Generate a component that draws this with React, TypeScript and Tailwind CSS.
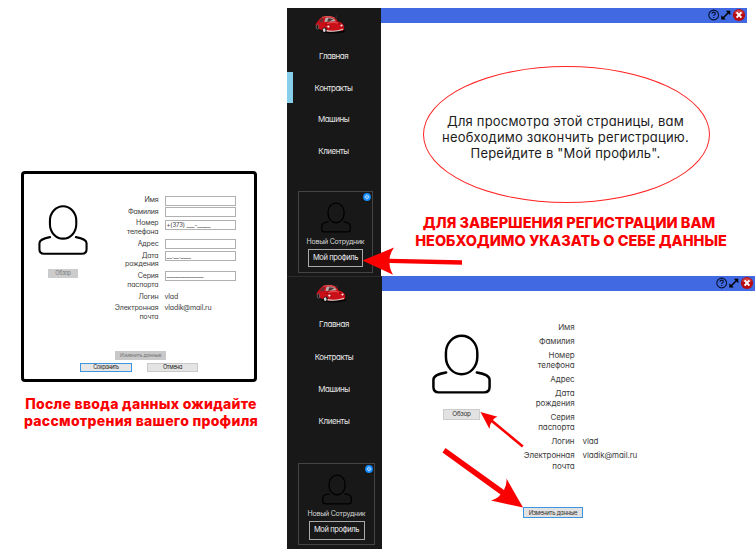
import React from "react";

const gothic = "font-['Inter','Open_Sans',sans-serif] [font-feature-settings:'cv11']";

function Person({ className }: { className: string }) {
  return (
    <svg viewBox="0 0 50 50.5" className={className} fill="none" stroke="currentColor" strokeWidth="2.1" strokeLinecap="round">
      <rect x="11.8" y="1.3" width="26.6" height="32.7" rx="13.3" ry="14.6" />
      <path d="M12 32.4C7.8 33.2 1.2 34.4 1.2 38.6v6.2c0 3.2 1.6 4.5 4.5 4.5h38.6c2.9 0 4.5-1.3 4.5-4.5v-6.2c0-4.2-6.6-5.4-10.8-6.2" />
    </svg>
  );
}

function Car() {
  return (
    <svg viewBox="0 0 30 21" preserveAspectRatio="none" className="block h-[20px] w-[30px]">
      <ellipse cx="18" cy="17" rx="12" ry="2.5" fill="#050505" />
      <path d="M21.3 5V0" stroke="#444" strokeWidth=".5" />
      <path d="M1 9C3 7 4 3.6 7.5 2.2c4-1.5 9-1.2 12 .6 1.6 1 2.6 2.4 3 4 3 .6 6 2.2 6.6 5.2.3 2-.1 3.8-1.5 4.6L11 17.5 1.5 13.5C.6 12 .4 10.4 1 9Z" fill="#c90f18" />
      <path d="M3.8 7.5C4.8 5 6.5 3.4 8.5 3L8 7.6Z" fill="#6b3034" />
      <path d="M9.5 7.3 10.4 3c3-.7 6.2-.3 8.4.9 1 .7 1.7 1.6 2 2.7Z" fill="#b8aaa8" />
      <path d="m12 7 1.5-3.5 5 .6-4 2.8Z" fill="#4c3032" />
      <path d="M7 2.5C11 .9 16 1.2 19.5 3M12 9.2c4-1.8 8-1.8 11-.5" stroke="#f25a58" strokeWidth=".9" fill="none" />
      <path d="M10 10c3-1 5 .4 5.4 3.8M23 9c3 .2 4.7 2 5 4" stroke="#7d0509" strokeWidth=".7" fill="none" />
      <ellipse cx="2.4" cy="12.5" rx="1.2" ry="2.5" fill="#171717" stroke="#999" strokeWidth=".5" />
      <ellipse cx="9.6" cy="15.8" rx="2.3" ry="2.8" fill="#161616" />
      <ellipse cx="9.2" cy="15.8" rx="1.3" ry="2" fill="#ddd" />
      <circle cx="13.4" cy="12.2" r="1.2" fill="#f9e8e5" />
      <circle cx="26.5" cy="11" r="1.1" fill="#f9e8e5" />
      <path d="M11.5 16.4c5 1 11 .8 16.5-1.5" stroke="#d9d5d3" strokeWidth="1.1" fill="none" />
    </svg>
  );
}

function Gear() {
  return (
    <svg viewBox="0 0 8 8" className="absolute right-[1.5px] top-[1px] h-2 w-2">
      <circle cx="4" cy="4" r="3.9" fill="#168bfd" />
      <circle cx="4" cy="4" r="1.4" fill="none" stroke="#c7e4ff" strokeWidth=".9" />
      <circle cx="4" cy="4" r="2.1" fill="none" stroke="#c7e4ff" strokeWidth=".6" strokeDasharray=".8 .85" />
    </svg>
  );
}

function TitleBar() {
  return (
    <header className="flex h-[15px] shrink-0 items-start justify-end bg-[#4169e1]">
      <svg viewBox="0 0 40 14" className="h-[14px] w-10">
        <circle cx="6.7" cy="7" r="4.9" fill="none" stroke="#07102d" strokeWidth="1.1" />
        <path d="M5 5.8c0-2.2 3.3-2.2 3.3-.1 0 1.2-1.6 1.1-1.6 2.4M6.7 9.1v1" fill="none" stroke="#07102d" strokeWidth="1.1" />
        <path d="m15.8 10.2 6-6" stroke="#000" strokeWidth="1.5" />
        <path d="M18.8 2.8h4.5v4.4ZM14.3 7.2v4.4h4.5Z" fill="#000" />
        <circle cx="32" cy="7" r="6.1" fill="#b70c11" />
        <path d="M27.2 5.2a5.2 5.2 0 0 1 9.6 0Q32 7 27.2 5.2" fill="#d14040" />
        <path d="m29.6 4.4 4.8 5.2m0-5.2-4.8 5.2" stroke="#fff" strokeWidth="2" />
      </svg>
    </header>
  );
}

const navItems = ["Главная", "Контракты", "Машины", "Клиенты"];

function Sidebar({ active, large }: { active?: string; large?: boolean }) {
  return (
    <aside className={`flex shrink-0 flex-col bg-[#181818] ${large ? "w-[95px] border-t border-t-[#2c2c2c]" : "w-[94px]"}`}>
      <div className={`flex shrink-0 justify-center pr-[8px] pt-[7px] ${large ? "h-[31px]" : "h-8"}`}>
        <Car />
      </div>
      <nav>
        {navItems.map((item) => (
          <div
            key={item}
            className={`flex items-center justify-center whitespace-nowrap border-l-[6px] pr-[7px] text-[8px] text-[#e4e4e4] ${
              large ? "h-[32.4px] tracking-[-0.4px]" : "h-[31.7px] tracking-[-0.5px]"
            } ${active === item ? "border-[#87ceeb]" : "border-transparent"}`}
          >
            {item}
          </div>
        ))}
      </nav>
      <div
        className={`relative ml-[11px] flex h-[82px] flex-col items-center border border-[#444] pt-[10px] ${
          large ? "mt-[25px] w-[77px]" : "mt-[24px] w-[75px]"
        }`}
      >
        <Gear />
        <Person className="h-[31px] w-[30px] text-black" />
        <span className="mt-[2px] whitespace-nowrap text-[7px] leading-[13px] tracking-[-0.25px] text-[#d5d5d5]">
          Новый Сотрудник
        </span>
        <button
          className={`mt-px flex shrink-0 items-center justify-center whitespace-nowrap border border-[#aaa] text-[7.5px] tracking-[-0.4px] text-[#eee] ${
            large ? "h-[19px] w-[56px]" : "h-[18px] w-[55px]"
          }`}
        >
          Мой профиль
        </button>
      </div>
    </aside>
  );
}

type Field = { lines: string[]; value?: string; text?: string; nudge?: string };

const fields: Field[] = [
  { lines: ["Имя"], value: "" },
  { lines: ["Фамилия"], value: "", nudge: "-mt-[1px]" },
  { lines: ["Номер", "телефона"], value: "+(373) ___-_____", nudge: "mt-[1px]" },
  { lines: ["Адрес"], value: "", nudge: "-mt-[1px]" },
  { lines: ["Дата", "рождения"], value: "__.__.____", nudge: "-mt-[0.5px]" },
  { lines: ["Серия", "паспорта"], value: "______________", nudge: "-mt-[1.5px]" },
  { lines: ["Логин"], text: "vlad" },
  { lines: ["Электронная", "почта"], text: "vladik@mail.ru" },
];

function Fields({ editable }: { editable?: boolean }) {
  return (
    <div
      className={`flex flex-col text-[#404040] ${
        editable
          ? "gap-[2.9px] text-[7px] leading-[8.8px] tracking-[-0.15px]"
          : "gap-[3.3px] text-[8px] leading-[10.5px] tracking-[-0.1px]"
      }`}
    >
      {fields.map((f) => (
        <div key={f.lines[0]} className={`flex items-start ${editable ? "gap-[6px]" : "gap-[8px]"}`}>
          <div className="w-[60px] whitespace-nowrap text-right">
            {f.lines.map((line) => (
              <div key={line}>{line}</div>
            ))}
          </div>
          {f.text && <span>{f.text}</span>}
          {editable && f.value !== undefined && (
            <div className={`h-[8.8px] ${f.nudge ?? ""}`}>
              <div className="flex h-[10px] w-[71px] items-center whitespace-nowrap border border-[#b0b0b0] pl-px text-[6px] tracking-[-0.1px]">
                {f.value}
              </div>
            </div>
          )}
        </div>
      ))}
    </div>
  );
}

export default function App() {
  return (
    <div className={`relative flex h-[552px] w-[755px] overflow-hidden bg-white ${gothic}`}>
      <div className="w-[287px] shrink-0 pt-[171px]">
        <section className="ml-[21px] flex h-[211px] w-[236px] flex-col rounded-[4px] border-[3px] border-black">
          <div className="flex h-[177px] pl-[14px]">
            <div className="flex w-[50px] flex-col items-center pt-[31px]">
              <Person className="h-[50px] w-[50px] text-black" />
              <button className="mt-[14px] h-[9px] w-[30px] bg-[#ccc] text-[5.5px] leading-[9px] tracking-[-0.3px] text-[#777]">
                Обзор
              </button>
            </div>
            <div className="ml-[10.5px] pt-[22px]">
              <Fields editable />
            </div>
          </div>
          <div className="flex flex-col">
            <button className="ml-[91px] h-[9px] w-[51px] whitespace-nowrap bg-[#c8c8c8] text-[5px] leading-[9px] tracking-[-0.2px] text-[#777]">
              Изменить данные
            </button>
            <div className="mt-[3px] flex gap-[15px] pl-[56px]">
              <button className="h-[9px] w-[52px] border border-[#3d94df] bg-[#e6e6e6] text-[5.5px] leading-[7px] tracking-[-0.4px] text-[#222]">
                Сохранить
              </button>
              <button className="h-[9px] w-[51px] border border-[#c8c8c8] bg-[#e4e4e4] text-[5.5px] leading-[7px] tracking-[-0.3px] text-[#222]">
                Отмена
              </button>
            </div>
          </div>
        </section>
        <div className="mt-[12.5px] whitespace-nowrap pr-[5px] text-center text-[14px] font-extrabold leading-[17px] tracking-[0.28px] text-[#fb0000] [font-feature-settings:normal]">
          <div>После ввода данных ожидайте</div>
          <div>рассмотрения вашего профиля</div>
        </div>
      </div>

      <div className="flex w-[468px] flex-col pt-2">
        <section className="flex h-[268px] w-[460px]">
          <Sidebar active="Контракты" />
          <div className="flex flex-1 flex-col">
            <TitleBar />
            <div className="ml-[42px] mt-[43px] flex h-[137px] w-[287px] shrink-0 flex-col items-center justify-center whitespace-nowrap rounded-[50%] border border-[#f22] pr-[2px] pt-[4px] text-[13px] leading-4 tracking-[0.19px] text-[#1c1c1c]">
              <div>Для просмотра этой страницы, вам</div>
              <div>необходимо закончить регистрацию.</div>
              <div>Перейдите в "Мой профиль".</div>
            </div>
            <div className="ml-[25px] mt-[11px] w-[330px] whitespace-nowrap text-center text-[14.5px] font-extrabold leading-[18px] text-[#fb0000] [font-feature-settings:normal]">
              <div className="pr-[4px]">ДЛЯ ЗАВЕРШЕНИЯ РЕГИСТРАЦИИ ВАМ</div>
              <div>НЕОБХОДИМО УКАЗАТЬ О СЕБЕ ДАННЫЕ</div>
            </div>
          </div>
        </section>

        <section className="flex h-[273px]">
          <Sidebar large />
          <div className="flex flex-1 flex-col">
            <TitleBar />
            <div className="flex h-[216px] pl-[50px]">
              <div className="flex w-[59px] flex-col items-center pt-[43px]">
                <Person className="h-[60px] w-[59px] text-black" />
                <button className="mt-[15px] h-[11px] w-[37px] border border-[#ccc] bg-[#e2e2e2] text-[6.5px] leading-[9px] tracking-[-0.3px] text-[#333]">
                  Обзор
                </button>
              </div>
              <div className="ml-[23.5px] pt-[31px]">
                <Fields />
              </div>
            </div>
            <button className="ml-[141px] h-[11px] w-[60px] whitespace-nowrap border border-[#3d94df] bg-[#e2e2e2] text-[6px] leading-[9px] tracking-[-0.3px] text-[#333]">
              Изменить данные
            </button>
          </div>
        </section>
      </div>

      <svg viewBox="0 0 755 552" className="pointer-events-none absolute inset-0 h-[552px] w-[755px]" fill="#fb0000">
        <path d="M362.5 260.5 394 247.5q-4 6-4.5 11.2L462 260.3v4.4l-72.5-1.6q0 5.5 3.5 11.7Z" />
        <path d="m480.5 412 17 4.8q-3 1-4.6 3.2l30.7 25.5-1.6 2-30.6-25.3q-1.8 2.7-1.9 6.8Z" />
        <path d="M523 507.5 491 500.5q6-1.5 9.5-6L442.5 452.5 445.5 448l58.5 42q3-5 2.5-11.5Z" />
      </svg>
    </div>
  );
}
